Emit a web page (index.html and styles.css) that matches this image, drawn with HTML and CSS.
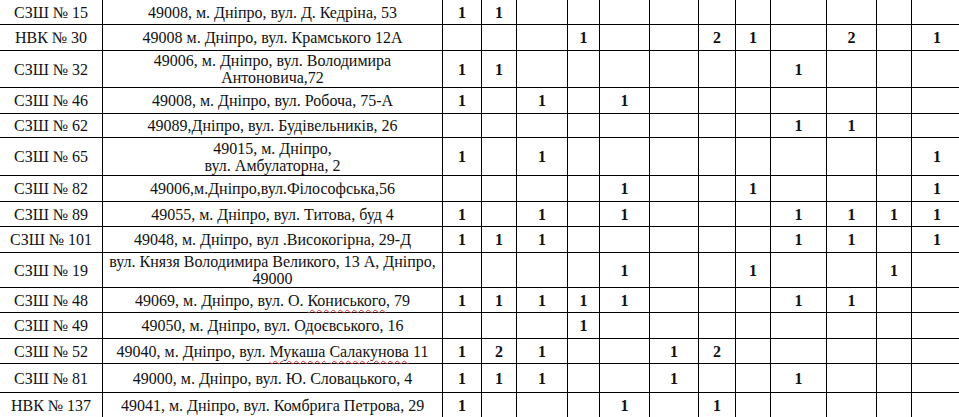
FILE: index.html
```html
<!DOCTYPE html>
<html lang="uk">
<head>
<meta charset="utf-8">
<title>Школи</title>
<link rel="stylesheet" href="styles.css">
</head>
<body>
<table class="grid">
  <colgroup>
    <col class="c-name"><col class="c-addr">
    <col class="w39"><col class="w35"><col class="w51"><col class="w32"><col class="w50"><col class="w49">
    <col class="w37"><col class="w35"><col class="w56"><col class="w50"><col class="w35"><col class="w51">
  </colgroup>
  <tbody>
    <tr class="h25"><td class="name">СЗШ № 15</td><td class="addr">49008, м. Дніпро, вул. Д. Кедріна, 53</td><td>1</td><td>1</td><td></td><td></td><td></td><td></td><td></td><td></td><td></td><td></td><td></td><td></td></tr>
    <tr class="h26"><td class="name">НВК № 30</td><td class="addr">49008 м. Дніпро, вул. Крамського 12А</td><td></td><td></td><td></td><td>1</td><td></td><td></td><td>2</td><td>1</td><td></td><td>2</td><td></td><td>1</td></tr>
    <tr class="h37"><td class="name">СЗШ № 32</td><td class="addr">49006, м. Дніпро, вул. Володимира Антоновича,72</td><td>1</td><td>1</td><td></td><td></td><td></td><td></td><td></td><td></td><td>1</td><td></td><td></td><td></td></tr>
    <tr class="h26"><td class="name">СЗШ № 46</td><td class="addr">49008, м. Дніпро, вул. Робоча, 75-А</td><td>1</td><td></td><td>1</td><td></td><td>1</td><td></td><td></td><td></td><td></td><td></td><td></td><td></td></tr>
    <tr class="h24"><td class="name">СЗШ № 62</td><td class="addr">49089,Дніпро, вул. Будівельників, 26</td><td></td><td></td><td></td><td></td><td></td><td></td><td></td><td></td><td>1</td><td>1</td><td></td><td></td></tr>
    <tr class="h38"><td class="name">СЗШ № 65</td><td class="addr">49015, м. Дніпро,<br>вул. Амбулаторна, 2</td><td>1</td><td></td><td>1</td><td></td><td></td><td></td><td></td><td></td><td></td><td></td><td></td><td>1</td></tr>
    <tr class="h26"><td class="name">СЗШ № 82</td><td class="addr">49006,м.Дніпро,вул.Філософська,56</td><td></td><td></td><td></td><td></td><td>1</td><td></td><td></td><td>1</td><td></td><td></td><td></td><td>1</td></tr>
    <tr class="h25"><td class="name">СЗШ № 89</td><td class="addr">49055, м. Дніпро, вул. Титова, буд 4</td><td>1</td><td></td><td>1</td><td></td><td>1</td><td></td><td></td><td></td><td>1</td><td>1</td><td>1</td><td>1</td></tr>
    <tr class="h26"><td class="name">СЗШ № 101</td><td class="addr">49048, м. Дніпро, вул .Високогірна, 29-Д</td><td>1</td><td>1</td><td>1</td><td></td><td></td><td></td><td></td><td></td><td>1</td><td>1</td><td></td><td>1</td></tr>
    <tr class="h35"><td class="name">СЗШ № 19</td><td class="addr">вул. Князя Володимира Великого, 13 А, Дніпро, 49000</td><td></td><td></td><td></td><td></td><td>1</td><td></td><td></td><td>1</td><td></td><td></td><td>1</td><td></td></tr>
    <tr class="h25"><td class="name">СЗШ № 48</td><td class="addr">49069, м. Дніпро, вул. О. <span class="spell">Кониського</span>, 79</td><td>1</td><td>1</td><td>1</td><td>1</td><td>1</td><td></td><td></td><td></td><td>1</td><td>1</td><td></td><td></td></tr>
    <tr class="h26"><td class="name">СЗШ № 49</td><td class="addr">49050, м. Дніпро, вул. Одоєвського, 16</td><td></td><td></td><td></td><td>1</td><td></td><td></td><td></td><td></td><td></td><td></td><td></td><td></td></tr>
    <tr class="h25"><td class="name">СЗШ № 52</td><td class="addr">49040, м. Дніпро, вул. <span class="spell">Мукаша</span> <span class="spell">Салакунова</span> 11</td><td>1</td><td>2</td><td>1</td><td></td><td></td><td>1</td><td>2</td><td></td><td></td><td></td><td></td><td></td></tr>
    <tr class="h29"><td class="name">СЗШ № 81</td><td class="addr">49000, м. Дніпро, вул. Ю. Словацького, 4</td><td>1</td><td>1</td><td>1</td><td></td><td></td><td>1</td><td></td><td></td><td>1</td><td></td><td></td><td></td></tr>
    <tr class="h26"><td class="name">НВК № 137</td><td class="addr">49041, м. Дніпро, вул. Комбрига Петрова, 29</td><td>1</td><td></td><td></td><td></td><td>1</td><td></td><td>1</td><td></td><td></td><td></td><td></td><td></td></tr>
  </tbody>
</table>
</body>
</html>
```
FILE: styles.css
```css
html, body {
  margin: 0;
  padding: 0;
  overflow: hidden;
  background: #fff;
}

.grid {
  margin: -1px 0 0 -1px;
  width: 963px;
  table-layout: fixed;
  border-collapse: collapse;
  font-family: "Liberation Serif", "Times New Roman", serif;
  font-size: 16px;
  line-height: 17px;
  color: #111;
}

.grid td {
  border: 1px solid #000;
  padding: 0 5px;
  text-align: center;
  vertical-align: middle;
  font-weight: bold;
}

.grid td.name,
.grid td.addr {
  font-weight: normal;
}

.c-name { width: 103px; }
.c-addr { width: 340px; }
.w32 { width: 32px; }
.w35 { width: 35px; }
.w37 { width: 37px; }
.w39 { width: 39px; }
.w49 { width: 49px; }
.w50 { width: 50px; }
.w51 { width: 51px; }
.w56 { width: 56px; }

.h24 { height: 24px; }
.h25 { height: 25px; }
.h26 { height: 26px; }
.h29 { height: 29px; }
.h35 { height: 35px; }
.h37 { height: 37px; }
.h38 { height: 38px; }

.spell {
  text-decoration: underline wavy #d03030;
  text-decoration-thickness: 1px;
  text-underline-offset: 3px;
}
```
